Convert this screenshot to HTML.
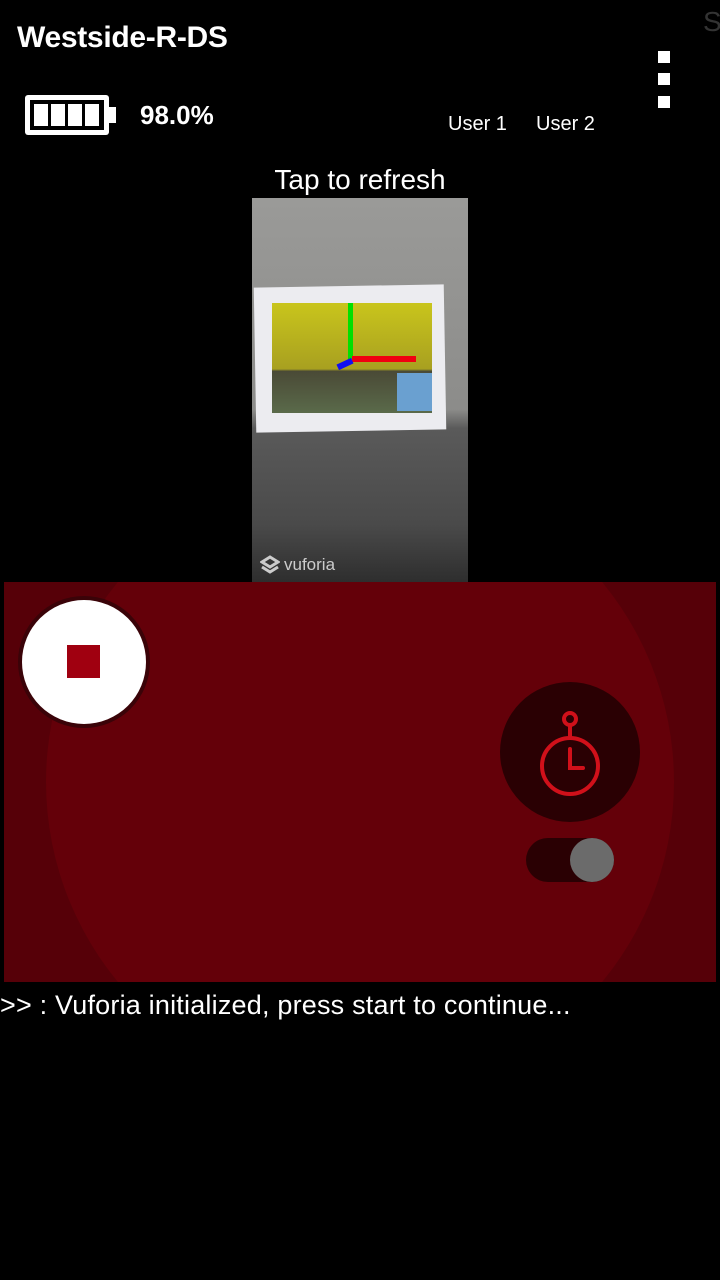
<!DOCTYPE html>
<html><head><style>
body{margin:0;width:720px;height:1280px;background:#000;position:relative;overflow:hidden;font-family:"Liberation Sans",sans-serif;color:#fff}
.a{position:absolute}
</style></head><body>
<div class="a" style="left:17px;top:21px;font-size:30px;font-weight:bold;letter-spacing:-0.3px">Westside-R-DS</div>
<div class="a" style="left:703px;top:6px;font-size:28px;color:#333">S</div>
<div class="a" style="left:658px;top:51px;width:12px;height:12px;background:#fff"></div>
<div class="a" style="left:658px;top:73px;width:12px;height:12px;background:#fff"></div>
<div class="a" style="left:658px;top:96px;width:12px;height:12px;background:#fff"></div>
<svg class="a" style="left:24px;top:94px" width="94" height="42"><rect x="1" y="1" width="84" height="40" rx="3" fill="#fff"/><rect x="85" y="13" width="7" height="16" fill="#fff"/><rect x="6" y="6" width="74" height="30" fill="#000"/><rect x="10" y="10" width="14" height="22" fill="#fff"/><rect x="27" y="10" width="14" height="22" fill="#fff"/><rect x="44" y="10" width="14" height="22" fill="#fff"/><rect x="61" y="10" width="14" height="22" fill="#fff"/></svg>
<div class="a" style="left:140px;top:100px;font-size:26px;font-weight:bold">98.0%</div>
<div class="a" style="left:448px;top:113px;font-size:20px">User 1</div>
<div class="a" style="left:536px;top:113px;font-size:20px">User 2</div>
<div class="a" style="left:0;width:720px;text-align:center;top:164px;font-size:28px">Tap to refresh</div>
<div class="a" style="left:252px;top:198px;width:216px;height:384px;background:linear-gradient(#9a9a98 0%,#8c8c8a 55%,#5a5a5a 60%,#4a4a4a 85%,#2e2e2e 100%)">
 <div class="a" style="left:3px;top:88px;width:190px;height:145px;background:#ececf0;transform:rotate(-1deg)"></div>
 <div class="a" style="left:20px;top:105px;width:160px;height:110px;background:linear-gradient(#c9c51c 0%,#a8a020 60%,#4a4a36 62%,#5a6a4a 100%)"></div>
 <div class="a" style="left:145px;top:175px;width:35px;height:38px;background:#6aa0d0"></div>
 <div class="a" style="left:96px;top:105px;width:5px;height:58px;background:#00e000"></div>
 <div class="a" style="left:100px;top:158px;width:64px;height:6px;background:#f00010"></div>
 <div class="a" style="left:85px;top:163px;width:16px;height:6px;background:#1010f0;transform:rotate(-25deg)"></div>
 <div class="a" style="left:32px;top:357px;font-size:17px;color:#ccc">vuforia</div>
 <svg class="a" style="left:8px;top:357px" width="20" height="22"><path d="M10 2L18 7L10 12L2 7Z M2 12L10 17L18 12" stroke="#ccc" stroke-width="3" fill="none"/></svg>
</div>
<div class="a" style="left:4px;top:582px;width:712px;height:400px;background:#560008;overflow:hidden">
 <div class="a" style="left:42px;top:-114px;width:628px;height:628px;border-radius:50%;background:#640009"></div>
 <div class="a" style="left:14px;top:14px;width:132px;height:132px;border-radius:50%;background:#3a0308"></div>
 <div class="a" style="left:18px;top:18px;width:124px;height:124px;border-radius:50%;background:#fff"></div>
 <div class="a" style="left:63px;top:63px;width:33px;height:33px;background:#a00010"></div>
 <div class="a" style="left:496px;top:100px;width:140px;height:140px;border-radius:50%;background:#2a0003"></div>
 <svg class="a" style="left:526px;top:124px" width="80" height="90"><g stroke="#d0101a" stroke-width="4" fill="none"><circle cx="40" cy="13" r="6"/><path d="M40 19V31"/><circle cx="40" cy="60" r="28"/><path d="M40 43V62H53" stroke-linecap="round"/></g></svg>
 <div class="a" style="left:522px;top:256px;width:88px;height:44px;border-radius:22px;background:#2a0003"></div>
 <div class="a" style="left:566px;top:256px;width:44px;height:44px;border-radius:50%;background:#6b6b6b"></div>
</div>
<div class="a" style="left:0;top:990px;font-size:27px;letter-spacing:0.2px">&gt;&gt; : Vuforia initialized, press start to continue...</div>
</body></html>
